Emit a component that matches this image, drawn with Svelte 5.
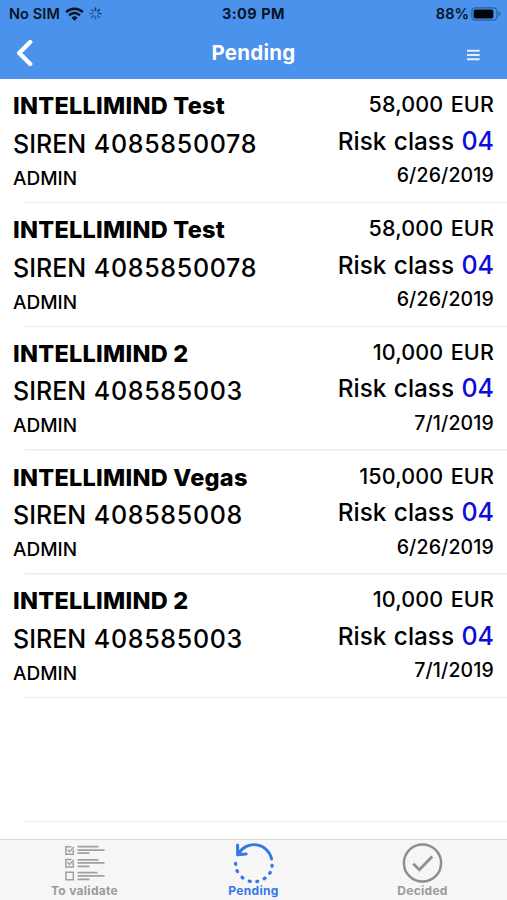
<script lang="ts">
  interface Entry {
    company: string;
    siren: string;
    owner: string;
    amount: string;
    risk: string;
    date: string;
  }

  const entries: Entry[] = [
    { company: 'INTELLIMIND Test', siren: '4085850078', owner: 'ADMIN', amount: '58,000', risk: '04', date: '6/26/2019' },
    { company: 'INTELLIMIND Test', siren: '4085850078', owner: 'ADMIN', amount: '58,000', risk: '04', date: '6/26/2019' },
    { company: 'INTELLIMIND 2', siren: '408585003', owner: 'ADMIN', amount: '10,000', risk: '04', date: '7/1/2019' },
    { company: 'INTELLIMIND Vegas', siren: '408585008', owner: 'ADMIN', amount: '150,000', risk: '04', date: '6/26/2019' },
    { company: 'INTELLIMIND 2', siren: '408585003', owner: 'ADMIN', amount: '10,000', risk: '04', date: '7/1/2019' },
  ];

  const tabs = ['To validate', 'Pending', 'Decided'];
  let active = $state('Pending');

  const spokes = [0, 45, 90, 135, 180, 225, 270, 315];
</script>

<div class="screen">
  <header>
    <div class="status">
      <div class="status-left">
        <span class="carrier">No SIM</span>
        <svg class="wifi" width="19" height="14" viewBox="0 0 19 14">
          <g fill="none" stroke="#061426" stroke-width="2.5">
            <path d="M1.2 5.1a11.8 11.8 0 0 1 16.6 0" />
            <path d="M4.1 8.3a7.7 7.7 0 0 1 10.8 0" />
          </g>
          <path d="M6.5 10.8a4.3 4.3 0 0 1 6 0l-3 3z" fill="#061426" />
        </svg>
        <svg class="spinner" width="13" height="13" viewBox="0 0 13 13">
          {#each spokes as angle, i}
            <line
              x1="6.5" y1="1" x2="6.5" y2="3.4"
              stroke="#123b70" stroke-width="1.6" stroke-linecap="round"
              opacity={i < 3 ? 0.95 : 0.6}
              transform="rotate({angle} 6.5 6.5)"
            />
          {/each}
        </svg>
      </div>
      <span class="clock">3:09 PM</span>
      <div class="status-right">
        <span class="charge">88%</span>
        <svg width="30" height="14" viewBox="0 0 30 14">
          <rect x="0.8" y="0.8" width="25.2" height="12.4" rx="3.6" fill="none" stroke="#2c5f9f" stroke-width="1.3" />
          <rect x="2.6" y="2.4" width="19.8" height="9.2" rx="2" fill="#02050a" />
          <path d="M27.5 4.6q2 .8 2 2.4t-2 2.4z" fill="#2c5f9f" />
        </svg>
      </div>
    </div>
    <nav>
      <button class="back" aria-label="Back">
        <svg width="18" height="28" viewBox="0 0 18 28">
          <path d="M14.2 3 3.2 14l11 11" fill="none" stroke="#fff" stroke-width="4.4" stroke-linecap="round" stroke-linejoin="round" />
        </svg>
      </button>
      <h1>Pending</h1>
      <button class="menu" aria-label="Menu">
        <svg width="13" height="12" viewBox="0 0 13 12">
          <path d="M0 1.7h12.6M0 6h12.6M0 10.3h12.6" stroke="#e4f0ff" stroke-width="2" />
        </svg>
      </button>
    </nav>
  </header>

  <main>
    {#each entries as entry}
      <article class="row">
        <div class="left">
          <div class="company">{entry.company}</div>
          <div class="siren">SIREN <span>{entry.siren}</span></div>
          <div class="owner">{entry.owner}</div>
        </div>
        <div class="right">
          <div class="amount">{entry.amount} EUR</div>
          <div class="risk">Risk class <span>{entry.risk}</span></div>
          <div class="date">{entry.date}</div>
        </div>
      </article>
    {/each}
    <div class="row"></div>
  </main>

  <footer>
    {#each tabs as tab}
      <button class="tab" class:active={tab === active} onclick={() => (active = tab)}>
        {#if tab === 'To validate'}
          <svg width="42" height="42" viewBox="0 0 42 42" fill="none" stroke="#a0a0a0">
            <path d="M7.5 4.7H1.9v7.6h7.4V7.5M7.5 17.4H1.9V25h7.4v-5.2M1.9 30.2h7.4v7.6H1.9z" stroke-width="1.5" />
            <path d="M3.6 7.6l2 2.2L9.8 5M3.6 20.3l2 2.2 4.2-4.7" stroke-width="1.4" />
            <path d="M13.5 4.6h21M13.5 8.2h27M13.5 11.2h12M13.5 17.8h21M13.5 20.9h27M13.5 24.3h12M13.5 30.6h20M13.5 33.8h27M13.5 37.4h12" stroke-width="1.7" />
          </svg>
        {:else if tab === 'Pending'}
          <svg width="42" height="42" viewBox="0 0 42 42" fill="none" stroke="#3478e5" stroke-linecap="round">
            <path d="M5.5 11.5A18 18 0 0 1 38.6 17" stroke-width="2.9" />
            <path d="M4.6 3v9.8l8.5-.8" stroke-width="3" stroke-linejoin="round" />
            <g stroke-width="3.3">
              <path d="M2.6 21.4l.1 1M4.1 28.8l.4.7M9.1 35.3l.7.6M16.3 39.1l.8.2M23.9 39.5l.8-.1M31.3 36.7l.7-.5M36.7 31.2l.5-.7M39 24.2l.1-.7" />
            </g>
          </svg>
        {:else}
          <svg width="42" height="42" viewBox="0 0 42 42" fill="none" stroke="#8f8f8f">
            <circle cx="20.5" cy="21" r="18.6" stroke-width="2.5" />
            <path d="M11.3 21.8l6.1 6L30.2 14.5" stroke-width="2.8" />
          </svg>
        {/if}
        <span>{tab}</span>
      </button>
    {/each}
  </footer>
</div>

<style>
  :global(body) {
    margin: 0;
    background: #fff;
  }

  .screen {
    display: flex;
    flex-direction: column;
    width: 507px;
    height: 900px;
    overflow: hidden;
    background: #fff;
    color: #000;
    font-family: Inter, 'Liberation Sans', sans-serif;
  }

  button {
    padding: 0;
    border: 0;
    background: none;
    font: inherit;
    color: inherit;
  }

  svg {
    display: block;
  }

  header {
    flex: none;
    height: 79px;
    background: #4a92eb;
  }

  .status {
    display: grid;
    grid-template-columns: 1fr auto 1fr;
    align-items: center;
    height: 27px;
    padding: 0 8px;
    color: #061426;
    font-size: 14.5px;
    line-height: 27px;
  }

  .status-left,
  .status-right {
    display: flex;
    align-items: center;
  }

  .status-left {
    padding-left: 1px;
  }

  .status-right {
    justify-content: flex-end;
    gap: 2px;
  }

  .status-right svg {
    margin-right: -2px;
  }

  .carrier {
    font-weight: 600;
    letter-spacing: 0.1px;
  }

  .wifi {
    margin: 0 5px 0 5px;
  }

  .clock {
    font-weight: 700;
    letter-spacing: 0.5px;
  }

  .charge {
    font-weight: 600;
  }

  nav {
    display: grid;
    grid-template-columns: 1fr auto 1fr;
    align-items: center;
    height: 52px;
    padding: 0 27px 0 16px;
  }

  .back {
    justify-self: start;
  }

  .menu {
    justify-self: end;
    margin-top: 3px;
  }

  h1 {
    margin: -2px -5.5px 0 5.5px;
    color: #fff;
    font-size: 20.5px;
    font-weight: 700;
    letter-spacing: 0.25px;
  }

  main {
    flex: 1;
    min-height: 0;
    overflow: hidden;
  }

  .row {
    display: flex;
    justify-content: space-between;
    box-sizing: border-box;
    height: 123.75px;
    padding: 8px 13px 0;
    background: linear-gradient(#ececec, #ececec) 25px 100% / 100% 1.5px no-repeat;
    white-space: nowrap;
  }

  .row:first-child {
    margin-top: 0.6px;
  }

  .left {
    padding-top: 0.9px;
  }

  .right {
    padding-top: 0.9px;
    text-align: right;
  }

  .company {
    font-size: 23.5px;
    font-weight: 800;
    letter-spacing: 0.26px;
    line-height: 36.3px;
  }

  .siren {
    font-size: 25px;
    font-weight: 500;
    line-height: 38px;
    word-spacing: 1px;
  }

  .siren span {
    letter-spacing: 0.7px;
  }

  .owner {
    font-size: 19px;
    font-weight: 500;
    line-height: 32.6px;
  }

  .amount {
    font-size: 21.5px;
    font-weight: 500;
    line-height: 33.4px;
    letter-spacing: 0.15px;
    word-spacing: 1.5px;
  }

  .risk {
    font-size: 24.3px;
    font-weight: 550;
    line-height: 39.4px;
    word-spacing: 1px;
  }

  .risk span {
    color: #0c0cdc;
    font-size: 25px;
  }

  .date {
    font-size: 19.5px;
    font-weight: 500;
    line-height: 29.2px;
    letter-spacing: 0.15px;
  }

  footer {
    flex: none;
    display: grid;
    grid-template-columns: repeat(3, 1fr);
    box-sizing: border-box;
    height: 61px;
    border-top: 1px solid #d8d8d8;
    background: #f6f6f6;
  }

  .tab {
    display: flex;
    flex-direction: column;
    align-items: center;
    padding-top: 2px;
    color: #9a9a9a;
    font-size: 12px;
    font-weight: 700;
    letter-spacing: 0.3px;
    line-height: 14px;
  }

  .tab.active {
    color: #3478e5;
  }
</style>
